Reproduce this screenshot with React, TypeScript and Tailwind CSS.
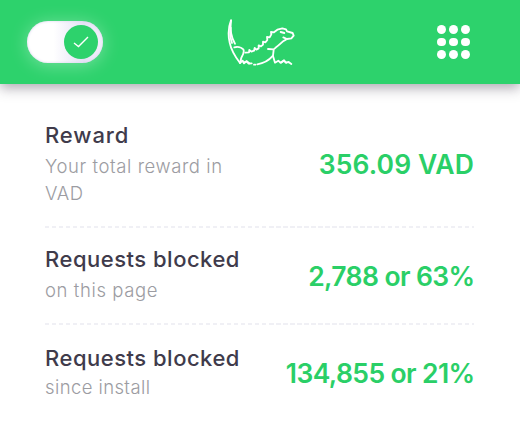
interface Stat {
  title: string;
  caption: string;
  value: string;
  rowClass: string;
  titleClass: string;
  captionClass: string;
  valueClass: string;
}

const STATS: Stat[] = [
  {
    title: "Reward",
    caption: "Your total reward in VAD",
    value: "356.09 VAD",
    rowClass: "h-[142px] pt-[38px]",
    titleClass: "tracking-[0.9px]",
    captionClass: "mt-[4px] w-[190px] tracking-[0.58px]",
    valueClass: "mt-[26px] tracking-[0.1px]",
  },
  {
    title: "Requests blocked",
    caption: "on this page",
    value: "2,788 or 63%",
    rowClass: "h-[95px] pt-[18px]",
    titleClass: "tracking-[0.5px]",
    captionClass: "mt-[4px] tracking-[0.6px]",
    valueClass: "mt-[14px] -mr-[0.6px] tracking-[-0.6px]",
  },
  {
    title: "Requests blocked",
    caption: "since install",
    value: "134,855 or 21%",
    rowClass: "h-[97px] pt-[20px]",
    titleClass: "tracking-[0.5px]",
    captionClass: "mt-[2px] tracking-[0.4px]",
    valueClass: "mt-[12px] -mr-[0.6px] tracking-[-0.6px]",
  },
];

export default function App() {
  return (
    <main className="h-[422px] w-[520px] overflow-hidden bg-white font-['Inter',sans-serif]">
      {/* Header */}
      <header className="flex h-[84px] items-center bg-[#2dd26c] pl-[27px] pr-[50px] shadow-[0_4px_12px_rgba(60,50,70,0.42)]">
        <Toggle />
        <Lizard />
        <div className="ml-auto grid grid-cols-3 gap-[3.2px]">
          {Array.from({ length: 9 }, (_, i) => (
            <span key={i} className="size-[8.9px] rounded-full bg-white" />
          ))}
        </div>
      </header>

      {/* Stats */}
      <section className="px-[45px]">
        {STATS.map((stat, i) => (
          <div key={stat.caption}>
            {i > 0 && (
              <div className="h-[2px] w-[429px] bg-[repeating-linear-gradient(90deg,#f0f0f5_0_4.5px,#ffffff_4.5px_7px)]" />
            )}
            <Row stat={stat} />
          </div>
        ))}
      </section>
    </main>
  );
}

function Row({ stat }: { stat: Stat }) {
  return (
    <div className={`flex w-[429px] items-start justify-between ${stat.rowClass}`}>
      <div>
        <h2
          className={`whitespace-nowrap text-[22px] font-medium leading-[27px] text-[#403b4b] ${stat.titleClass}`}
        >
          {stat.title}
        </h2>
        <p
          className={`text-[18.5px] font-light leading-[27px] text-[#9c9ca2] ${stat.captionClass}`}
        >
          {stat.caption}
        </p>
      </div>
      <strong
        className={`whitespace-nowrap text-[26.5px] font-semibold leading-[32px] text-[#2acf67] ${stat.valueClass}`}
      >
        {stat.value}
      </strong>
    </div>
  );
}

function Toggle() {
  return (
    <button
      aria-label="Protection"
      className="flex h-[42px] w-[76px] items-center justify-end rounded-full bg-[linear-gradient(90deg,#ffffff_35%,#e4e1f5_75%,#f4f2fc)] pr-[5px] shadow-[0_2px_18px_rgba(255,255,255,0.35),inset_0_0_3px_#d8d3ee]"
    >
      <span className="grid size-[34px] place-items-center rounded-full bg-[#2dd26c]">
        <svg width="18" height="14" viewBox="0 0 18 14" fill="none">
          <path d="M2 8 6.5 11.5 16 2" stroke="white" strokeWidth="1.4" />
        </svg>
      </span>
    </button>
  );
}

function Lizard() {
  return (
    <svg
      className="ml-[124px]"
      width="68"
      height="50"
      viewBox="36 28 204 150"
      fill="none"
      stroke="white"
      strokeWidth="5.5"
      strokeLinecap="round"
      strokeLinejoin="round"
    >
      {/* tail */}
      <path d="M48 38C40 58 39 82 44 105C49 130 61 148 75 166" />
      <path d="M48 38C45 61 48 88 60 108" />
      <path d="M47 60C44 78 46 92 51 106" />
      {/* hind leg */}
      <path d="M58 119C66 116 78 118 85 125C89 133 84 142 79 150L75 166L83 159L87 167L95 161L101 168L110 167M117 171L121 171" />
      {/* spiny back */}
      <path d="M91 135L102 134L103 127L109 132L117 129L119 121L124 126L131 122L131 113L138 116L144 111L144 102L151 104L157 97L156 88L164 89L169 80L168 73L177 74L187 66L202 62L213 65L216 71L233 76L236 84L229 92L216 94L205 89" />
      <path d="M197 73L208 76" />
      {/* belly and front leg */}
      <path d="M213 96C201 101 193 112 183 119L176 125L159 124M176 127L174 144C162 158 147 167 127 170" />
      <path d="M174 145L180 165L190 159L196 165L207 158L212 165L221 163L229 169" />
      <path d="M86 165L95 161L103 167M198 165L207 159L214 165" />
    </svg>
  );
}
